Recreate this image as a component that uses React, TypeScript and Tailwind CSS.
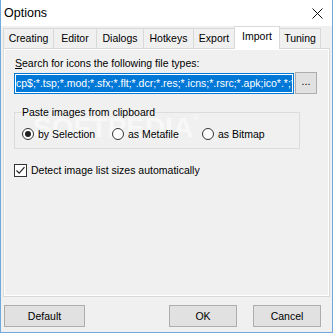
import React from 'react';

const tabs = [
  { label: 'Creating', w: 'w-[50px]' },
  { label: 'Editor', w: 'w-[43px]' },
  { label: 'Dialogs', w: 'w-[47px]' },
  { label: 'Hotkeys', w: 'w-[50px]' },
  { label: 'Export', w: 'w-[41px]' },
  { label: 'Import', w: 'w-[46px]', active: true },
  { label: 'Tuning', w: 'w-[41px]', last: true },
];

const Radio = ({ checked, label }: { checked?: boolean; label: string }) => (
  <div className="flex items-center w-[90px] h-[14px]">
    <span className="w-[12px] h-[12px] rounded-full border border-[#333] bg-white flex items-center justify-center">
      {checked && <span className="w-[6px] h-[6px] rounded-full bg-[#222]" />}
    </span>
    <span className="ml-[4px]">{label}</span>
  </div>
);

const WinButton = ({ label, w }: { label: string; w: string }) => (
  <button className={`${w} h-[22px] bg-[#e1e1e1] border border-[#adadad] flex items-center justify-center`}>
    {label}
  </button>
);

export default function App() {
  return (
    <div
      className="relative w-[333px] h-[333px] bg-[#f0f0f0] border-x border-b border-[#70a8e0] flex flex-col text-[10.5px] leading-[13px] text-black"
      style={{ fontFamily: '"Liberation Sans", Arial, sans-serif' }}
    >
      {/* Title bar */}
      <div className="h-[26px] bg-white flex items-center justify-between pl-[3px] pr-[9px]">
        <span className="text-[12.5px]">Options</span>
        <svg width="11" height="11" viewBox="0 0 11 11">
          <path d="M0.5 0.5 L10.5 10.5 M10.5 0.5 L0.5 10.5" stroke="#111" strokeWidth="1" />
        </svg>
      </div>

      {/* Tabs */}
      <div className="h-[22px] flex items-end pl-[2px]">
        {tabs.map((t) =>
          t.active ? (
            <div
              key={t.label}
              className={`${t.w} h-[23px] -mb-px relative z-10 bg-white border-t border-x border-[#d9d9d9] flex items-center justify-center pb-[3px]`}
            >
              {t.label}
            </div>
          ) : (
            <div
              key={t.label}
              className={`${t.w} h-[20px] bg-[#f0f0f0] border-t border-[#d9d9d9] flex items-center justify-center ${
                t.last ? 'border-r' : 'border-l'
              }`}
            >
              {t.label}
            </div>
          )
        )}
      </div>

      {/* Tab panel */}
      <div className="mx-[2px] h-[249px] border border-[#d9d9d9] bg-white p-px">
        <div className="relative h-full bg-[#f0f0f0] flex flex-col">
          <span className="absolute left-[28px] top-[64px] text-[28px] leading-none font-bold text-[#f8f8f8] pointer-events-none select-none">
            SOFTPEDIA<span className="text-[8px] align-top">®</span>
          </span>

          <div className="relative ml-[10px] mt-[7px]">
            <span className="underline">S</span>earch for icons the following file types:
          </div>

          <div className="relative ml-[9px] mt-[3px] flex items-start">
            <div className="w-[280px] h-[21px] border border-[#0078d7] bg-white p-px overflow-hidden">
              <div className="h-full bg-[#0078d7] text-white whitespace-nowrap flex items-center overflow-hidden">
                <span>cp$;*.tsp;*.mod;*.sfx;*.flt;*.dcr;*.res;*.icns;*.rsrc;*.apk;ico*.*;*.ani</span>
              </div>
            </div>
            <button className="ml-[1px] -mt-px w-[22px] h-[22px] bg-[#e1e1e1] border border-[#adadad] flex items-center justify-center pb-[3px]">
              ...
            </button>
          </div>

          <fieldset className="relative ml-[9px] mt-[12px] w-[280px] border border-[#dcdcdc] px-[7px] pb-[7px]">
            <legend className="px-0">Paste images from clipboard</legend>
            <div className="flex mt-[8px]">
              <Radio checked label="by Selection" />
              <Radio label="as Metafile" />
              <Radio label="as Bitmap" />
            </div>
          </fieldset>

          <div className="relative ml-[9px] mt-[15px] flex items-center">
            <span className="w-[13px] h-[13px] border border-[#333] bg-white flex items-center justify-center">
              <svg width="11" height="11" viewBox="0 0 11 11">
                <path d="M1.5 5.5 L4.2 8.2 L9.5 2.2" fill="none" stroke="#222" strokeWidth="1.2" />
              </svg>
            </span>
            <span className="ml-[4px]">Detect image list sizes automatically</span>
          </div>
        </div>
      </div>

      {/* Bottom buttons */}
      <div className="mt-[8px] flex pl-[3px] pr-[11px]">
        <WinButton label="Default" w="w-[81px]" />
        <div className="flex-1" />
        <WinButton label="OK" w="w-[68px]" />
        <div className="ml-[16px]">
          <WinButton label="Cancel" w="w-[68px]" />
        </div>
      </div>
    </div>
  );
}
